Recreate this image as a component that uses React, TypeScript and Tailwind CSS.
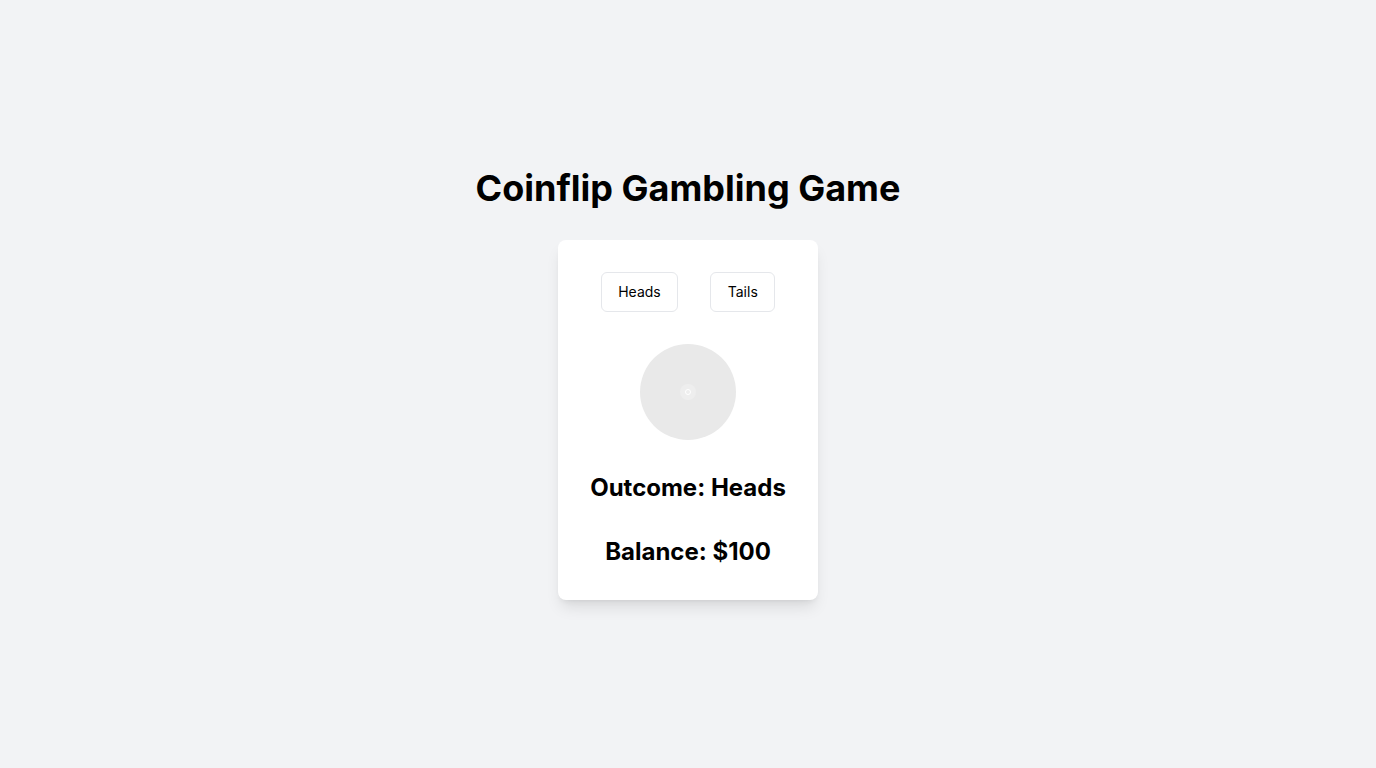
import { useState } from "react";

export default function App() {
  const [outcome] = useState("Heads");
  const [balance] = useState(100);

  return (
    <section
      className="min-h-screen w-full bg-[#f2f3f5] flex flex-col items-center justify-center"
      style={{ fontFamily: "Inter, 'Noto Sans', sans-serif" }}
    >
      <h1 className="text-4xl font-bold text-black mb-8">Coinflip Gambling Game</h1>

      <div className="bg-white rounded-lg shadow-lg p-8 w-[260px] flex flex-col items-center">
        <div className="flex gap-8">
          <button className="px-[16.5px] py-[9px] text-sm text-black bg-white border border-[#e5e7eb] rounded-md">
            Heads
          </button>
          <button className="px-[16.5px] py-[9px] text-sm text-black bg-white border border-[#e5e7eb] rounded-md">
            Tails
          </button>
        </div>

        <div className="mt-8 w-24 h-24 rounded-full bg-[#e9e9e9] flex items-center justify-center">
          <div className="w-4 h-4 rounded-full bg-[#eeeeee] flex items-center justify-center">
            <div className="w-1.5 h-1.5 rounded-full border border-white"></div>
          </div>
        </div>

        <h2 className="mt-8 text-2xl font-bold text-black">Outcome: {outcome}</h2>
        <h2 className="mt-8 text-2xl font-bold text-black">Balance: ${balance}</h2>
      </div>
    </section>
  );
}
